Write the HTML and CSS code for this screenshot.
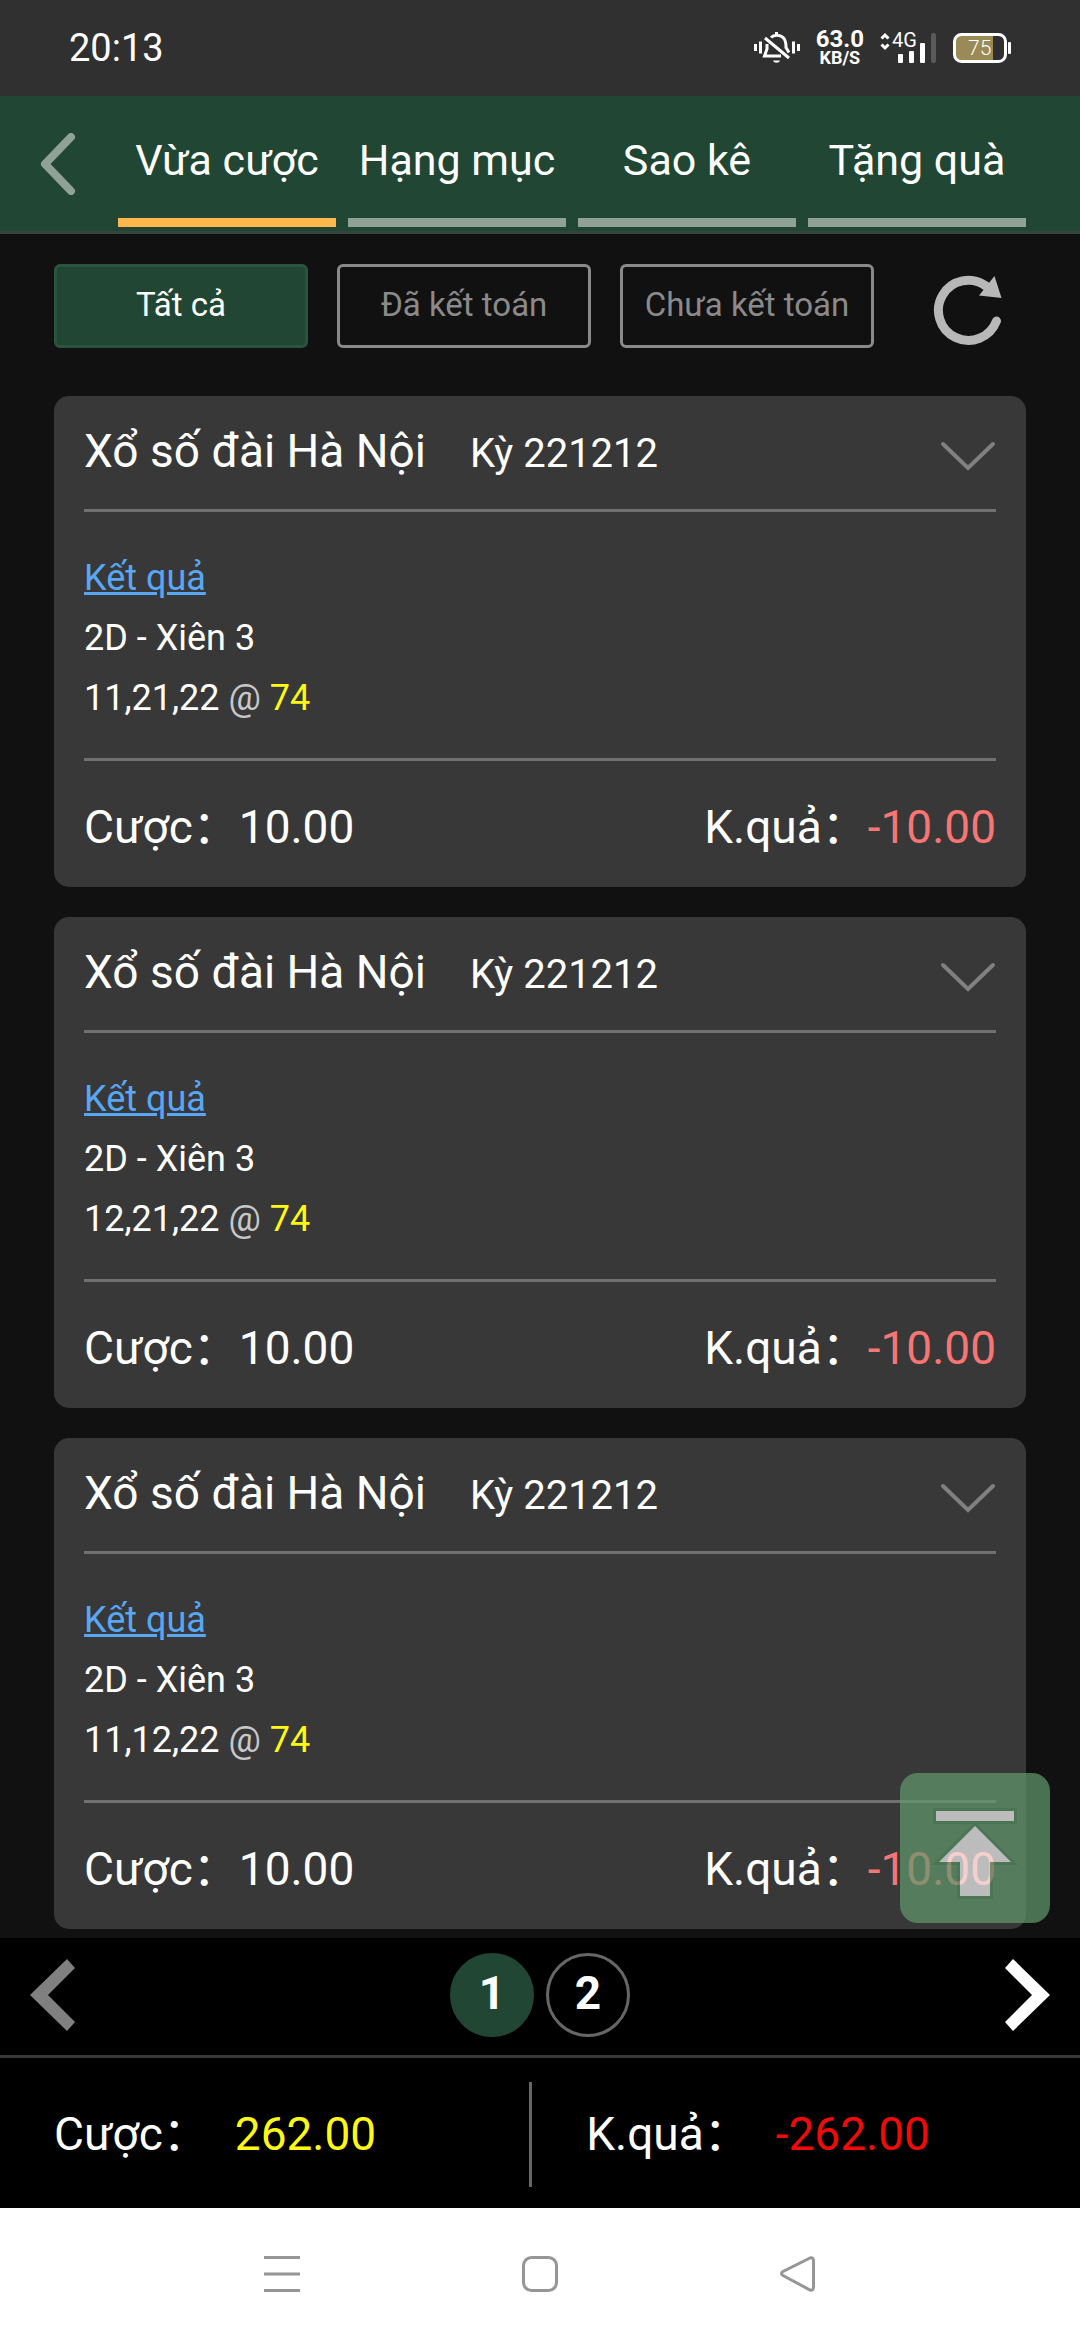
FILE: index.html
```html
<!DOCTYPE html>
<html lang="vi">
<head>
<meta charset="utf-8">
<meta name="viewport" content="width=device-width, initial-scale=1">
<title>Vừa cược</title>
<link rel="stylesheet" href="styles.css">
</head>
<body>
<div class="status">
  <span class="clock">20:13</span>
  <div class="status-icons">
    <svg width="46" height="32" viewBox="0 0 46 32" fill="none" stroke="#fff" stroke-width="3" aria-hidden="true">
      <path d="M1.500 12v7M6.500 9.500v12M39.500 9.500v12M44.500 12v7"/>
      <path d="M13 12v5l-2.500 7H27M17 5.500c3-3 10-3 13 1 2 3 2 6 2 9l3 5M22.500 0v3M11 6l24 20"/>
      <path d="M19 28.500h7c-1 3-6 3-7 0z" fill="#fff" stroke="none"/>
    </svg>
    <div class="speed"><span class="speed-value">63.0</span><span class="speed-unit">KB/S</span></div>
    <svg width="57" height="40" viewBox="0 -4 57 40" aria-hidden="true">
      <path d="M1.500 6.500L5 3l3.500 3.500M1.500 12.500L5 16l3.500-3.500" fill="none" stroke="#fff" stroke-width="3"/>
      <text x="12" y="15" class="network">4G</text>
      <g fill="#fff"><rect x="18" y="22" width="5" height="9" rx="1"/><rect x="29" y="19" width="5" height="12" rx="1"/><rect x="40" y="11" width="5" height="20" rx="1"/></g>
      <rect x="51" y="1" width="5" height="30" rx="2" fill="#5a5a5a"/>
    </svg>
    <svg width="58" height="32" viewBox="0 0 58 32" aria-hidden="true">
      <path d="M9 3h31v26H9q-7 0-7-7V10q0-7 7-7z" fill="#9a8a55"/>
      <rect x="1.500" y="2.500" width="51" height="27" rx="7" fill="none" stroke="#fff" stroke-width="3"/>
      <rect x="55" y="10" width="3" height="12" rx="1" fill="#fff"/>
      <text x="15" y="23" class="charge">75</text>
    </svg>
  </div>
</div>

<header class="topbar">
  <button class="back" type="button" aria-label="Quay lại">
    <svg width="36" height="62" viewBox="0 0 36 62" fill="none" stroke="#90a297" stroke-width="8" stroke-linecap="round" stroke-linejoin="round"><path d="M31 4L5 31l26 27"/></svg>
  </button>
  <nav class="tabs">
    <a class="tab tab-active" href="#vua-cuoc">Vừa cược</a>
    <a class="tab" href="#hang-muc">Hạng mục</a>
    <a class="tab" href="#sao-ke">Sao kê</a>
    <a class="tab" href="#tang-qua">Tặng quà</a>
  </nav>
</header>

<main class="content">
  <div class="filters">
    <button class="filter filter-active" type="button">Tất cả</button>
    <button class="filter" type="button">Đã kết toán</button>
    <button class="filter" type="button">Chưa kết toán</button>
    <button class="refresh" type="button" aria-label="Tải lại">
      <svg width="123" height="84" viewBox="0 0 123 84"><path d="M93.500 57A30 30 0 1 1 83 22" fill="none" stroke="#b8b8b8" stroke-width="9" stroke-linecap="round"/><path d="M91.500 12L98.500 34 76 31.500z" fill="#b8b8b8"/></svg>
    </button>
  </div>

  <article class="card">
    <div class="card-head">
      <h2 class="game">Xổ số đài Hà Nội</h2><span class="round">Kỳ 221212</span>
      <button class="expand" type="button" aria-label="Mở rộng"><svg width="56" height="32" viewBox="0 0 56 32" fill="none" stroke="#808080" stroke-width="4" stroke-linecap="round"><path d="M3 3l25 24L53 3"/></svg></button>
    </div>
    <div class="card-body">
      <a class="result" href="#ket-qua">Kết quả</a>
      <p class="line">2D - Xiên 3</p>
      <p class="line">11,21,22 <span class="at">@</span> <span class="odds">74</span></p>
    </div>
    <div class="card-foot"><span>Cược：10.00</span><span>K.quả：<span class="loss">-10.00</span></span></div>
  </article>

  <article class="card">
    <div class="card-head">
      <h2 class="game">Xổ số đài Hà Nội</h2><span class="round">Kỳ 221212</span>
      <button class="expand" type="button" aria-label="Mở rộng"><svg width="56" height="32" viewBox="0 0 56 32" fill="none" stroke="#808080" stroke-width="4" stroke-linecap="round"><path d="M3 3l25 24L53 3"/></svg></button>
    </div>
    <div class="card-body">
      <a class="result" href="#ket-qua">Kết quả</a>
      <p class="line">2D - Xiên 3</p>
      <p class="line">12,21,22 <span class="at">@</span> <span class="odds">74</span></p>
    </div>
    <div class="card-foot"><span>Cược：10.00</span><span>K.quả：<span class="loss">-10.00</span></span></div>
  </article>

  <article class="card">
    <div class="card-head">
      <h2 class="game">Xổ số đài Hà Nội</h2><span class="round">Kỳ 221212</span>
      <button class="expand" type="button" aria-label="Mở rộng"><svg width="56" height="32" viewBox="0 0 56 32" fill="none" stroke="#808080" stroke-width="4" stroke-linecap="round"><path d="M3 3l25 24L53 3"/></svg></button>
    </div>
    <div class="card-body">
      <a class="result" href="#ket-qua">Kết quả</a>
      <p class="line">2D - Xiên 3</p>
      <p class="line">11,12,22 <span class="at">@</span> <span class="odds">74</span></p>
    </div>
    <div class="card-foot"><span>Cược：10.00</span><span>K.quả：<span class="loss">-10.00</span></span></div>
  </article>

  <button class="to-top" type="button" aria-label="Lên đầu trang">
    <svg width="150" height="150" viewBox="0 0 150 150">
      <path d="M36 38h78v10H36zM75 53l36 36H90v34H60V89H39z" fill="#f4f4f4" stroke="#3c7a4c" stroke-opacity=".35" stroke-width="6" paint-order="stroke"/>
    </svg>
  </button>
</main>

<footer class="bottom">
  <nav class="pager" aria-label="Trang">
    <button class="arrow" type="button" aria-label="Trang trước"><svg width="45" height="72" viewBox="0 0 45 72"><path d="M37 0l8 9-27 27 27 27-8 9L0 36z" fill="#808080"/></svg></button>
    <div class="pages">
      <button class="page page-active" type="button">1</button>
      <button class="page" type="button">2</button>
    </div>
    <button class="arrow" type="button" aria-label="Trang sau"><svg width="45" height="72" viewBox="0 0 45 72"><path d="M8 0L0 9l27 27L0 63l8 9 37-36z" fill="#fff"/></svg></button>
  </nav>
  <div class="totals">
    <div class="total total-stake"><span>Cược：</span><span class="stake">262.00</span></div>
    <div class="total total-result"><span>K.quả：</span><span class="negative">-262.00</span></div>
  </div>
</footer>

<nav class="sysnav" aria-label="Hệ thống">
  <button class="sys" type="button" aria-label="Gần đây"><svg width="36" height="36" viewBox="0 0 36 36" stroke="#969696" stroke-width="3"><path d="M0 1.500h36M0 18h36M0 34.500h36"/></svg></button>
  <button class="sys" type="button" aria-label="Màn hình chính"><svg width="36" height="36" viewBox="0 0 36 36" fill="none" stroke="#969696" stroke-width="3"><rect x="1.500" y="1.500" width="33" height="33" rx="8"/></svg></button>
  <button class="sys" type="button" aria-label="Trở về"><svg width="36" height="36" viewBox="0 0 36 36" fill="none" stroke="#969696" stroke-width="3"><path d="M30 2L3 15.500q-3 2 0 4L30 34q3.500 1 3.500-3V5q0-4-3.500-3z"/></svg></button>
</nav>
</body>
</html>
```
FILE: styles.css
```css
* { box-sizing: border-box; }

body {
  margin: 0;
  min-height: 100vh;
  display: flex;
  flex-direction: column;
  background: #111;
  color: #fff;
  font-family: Roboto, "Noto Sans CJK SC", sans-serif;
  font-size: 36px;
}

button {
  margin: 0;
  padding: 0;
  border: 0;
  background: none;
  color: inherit;
  font: inherit;
  cursor: pointer;
}

svg { display: block; }

/* Device status bar */
.status {
  display: flex;
  align-items: center;
  justify-content: space-between;
  height: 96px;
  padding: 0 69px;
  background: #303030;
}
.clock { font-size: 38px; line-height: 48px; }
.status-icons { display: flex; align-items: center; gap: 16px; }
.speed { display: flex; flex-direction: column; align-items: center; font-weight: 700; }
.speed-value { font-size: 24px; line-height: 20px; }
.speed-unit { font-size: 18px; line-height: 18px; }
.network { fill: #fff; font-size: 20px; }
.charge { fill: #fff; font-size: 21px; font-weight: 300; }

/* Header tabs */
.topbar {
  display: flex;
  padding: 0 54px 4px 0;
  background: #214634;
  border-bottom: 3px solid #35453d;
}
.back {
  display: flex;
  align-items: center;
  flex: 0 0 118px;
  padding: 4px 0 0 40px;
}
.tabs {
  flex: 1;
  display: grid;
  grid-template-columns: repeat(4, 1fr);
  gap: 12px;
}
.tab {
  padding: 34px 0 28px;
  border-bottom: 9px solid #90a297;
  color: #fff;
  font-size: 43px;
  line-height: 60px;
  text-align: center;
  text-decoration: none;
  white-space: nowrap;
}
.tab-active { border-bottom-color: #ffb74d; }

/* Bet list */
.content {
  position: relative;
  flex: 1;
  display: flex;
  flex-direction: column;
  gap: 30px;
  padding: 30px 54px 9px;
}
.filters {
  display: grid;
  grid-template-columns: 1fr 1fr 1fr 123px;
  gap: 29px;
  margin-bottom: 18px;
}
.filter {
  height: 84px;
  padding-bottom: 4px;
  border: 3px solid #8a8a8a;
  border-radius: 6px;
  color: #8a8a8a;
  font-size: 33px;
  white-space: nowrap;
}
.filter-active { background: #214634; border-color: #2b543f; color: #fff; }

.card {
  padding: 0 30px;
  background: #383838;
  border-radius: 15px;
}
.card-head {
  display: flex;
  align-items: baseline;
  gap: 44px;
  padding: 25px 0;
  border-bottom: 3px solid #707070;
  line-height: 60px;
}
.game { margin: 0; font-size: 46px; font-weight: 400; }
.round { font-size: 40px; }
.expand { align-self: center; margin-left: auto; padding-top: 8px; }
.card-body {
  padding: 36px 0 30px;
  border-bottom: 3px solid #707070;
  line-height: 60px;
}
.result {
  color: #58a7f5;
  text-decoration-thickness: 3px;
}
.line { margin: 0; }
.at { color: #c8c8c8; }
.odds { color: #fff714; }
.card-foot {
  display: flex;
  justify-content: space-between;
  padding: 36px 0 30px;
  font-size: 46px;
  line-height: 60px;
}
.loss { color: #f87575; }

.to-top {
  position: absolute;
  right: 30px;
  bottom: 15px;
  background: #629b6e;
  border-radius: 18px;
  opacity: .7;
}

/* Pager and totals */
.bottom { background: #000; font-size: 46px; }
.pager {
  display: flex;
  align-items: center;
  justify-content: space-between;
  padding: 15px 30px 18px;
  border-bottom: 3px solid #383838;
}
.pages { display: flex; gap: 12px; }
.page {
  width: 84px;
  height: 84px;
  padding-bottom: 4px;
  border: 3px solid #666;
  border-radius: 50%;
  font-weight: 700;
}
.page-active { background: #214634; border-color: #214634; }
.totals {
  display: flex;
  padding: 24px 54px 21px;
  line-height: 105px;
}
.total { display: flex; gap: 26px; }
.total-stake { flex: 0 0 49.2%; border-right: 3px solid #666; }
.total-result { padding-left: 54px; }
.stake { color: #fff714; }
.negative { color: #f00a0a; }

/* Device navigation bar */
.sysnav {
  display: flex;
  justify-content: center;
  gap: 222px;
  padding: 48px 0;
  background: #fff;
}
```
